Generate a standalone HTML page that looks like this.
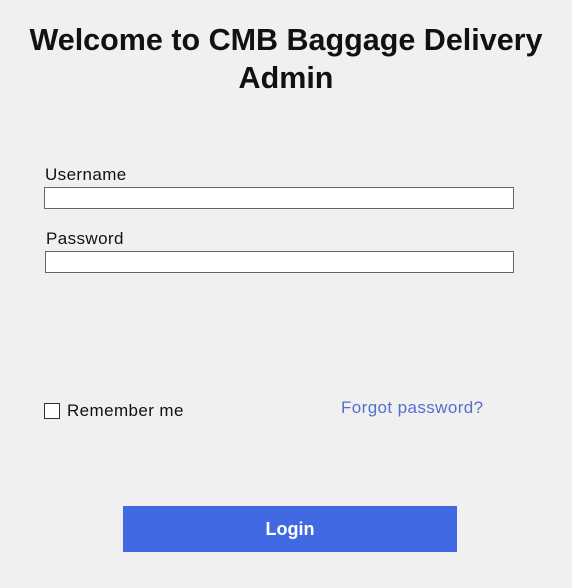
<!DOCTYPE html>
<html><head><meta charset="utf-8"><style>
html,body{margin:0;padding:0;}
body{width:572px;height:588px;background:#f0f0f0;position:relative;overflow:hidden;font-family:"Liberation Sans","DejaVu Sans",sans-serif;color:#111;}
.t{position:absolute;left:0;width:572px;text-align:center;font-weight:bold;font-size:30.5px;line-height:38px;white-space:nowrap;}
.lbl{position:absolute;font-size:17px;line-height:20px;letter-spacing:0.4px;}
.inp{position:absolute;background:#fff;border:1px solid #666;box-sizing:border-box;}
</style></head><body>
<div class="t" style="top:21px;">Welcome to CMB Baggage Delivery</div>
<div class="t" style="top:59px;">Admin</div>
<div class="lbl" style="left:45px;top:165px;">Username</div>
<div class="inp" style="left:44px;top:187px;width:470px;height:22px;"></div>
<div class="lbl" style="left:46px;top:229px;">Password</div>
<div class="inp" style="left:45px;top:251px;width:469px;height:22px;"></div>
<div class="inp" style="left:44px;top:403px;width:16px;height:16px;border-color:#333;"></div>
<div class="lbl" style="left:67px;top:401px;">Remember me</div>
<div class="lbl" style="left:341px;top:398px;color:#5570cc;">Forgot password?</div>
<div style="position:absolute;left:123px;top:506px;width:334px;height:46px;background:#4169e1;color:#fff;font-weight:bold;font-size:18px;line-height:46px;text-align:center;">Login</div>
</body></html>
